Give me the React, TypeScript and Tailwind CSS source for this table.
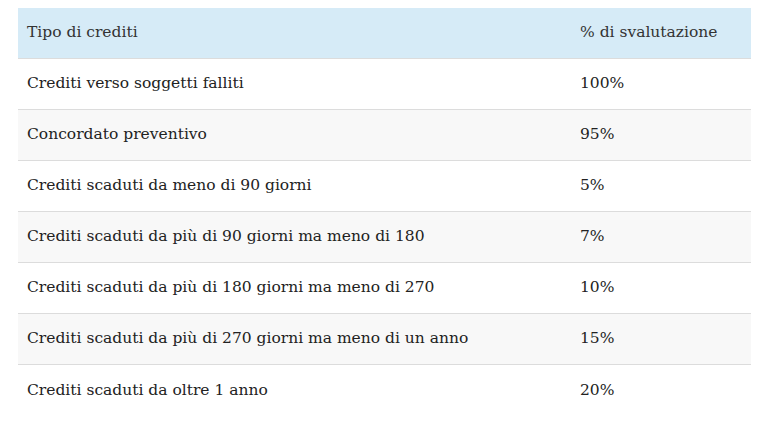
const rows: [string, string][] = [
  ['Crediti verso soggetti falliti', '100%'],
  ['Concordato preventivo', '95%'],
  ['Crediti scaduti da meno di 90 giorni', '5%'],
  ['Crediti scaduti da più di 90 giorni ma meno di 180', '7%'],
  ['Crediti scaduti da più di 180 giorni ma meno di 270', '10%'],
  ['Crediti scaduti da più di 270 giorni ma meno di un anno', '15%'],
  ['Crediti scaduti da oltre 1 anno', '20%'],
];

export default function App() {
  return (
    <div className="w-[768px] h-[426px] bg-white pt-[8px] pl-[18px] font-['DejaVu_Serif',serif] text-[15.5px]">
      <div className="w-[733px] flex flex-col">
        <div className="flex h-[51px] bg-[#d6ebf7] border-b border-[#dcdcdc] text-[#333]">
          <div className="w-[553px] pl-[9px] flex items-center">Tipo di crediti</div>
          <div className="flex-1 pl-[9px] flex items-center">% di svalutazione</div>
        </div>
        {rows.map(([a, b], i) => (
          <div
            key={i}
            className={
              'flex h-[51px] text-[#222] ' +
              (i % 2 === 1 ? 'bg-[#f8f8f8] ' : 'bg-white ') +
              (i < rows.length - 1 ? 'border-b border-[#dcdcdc]' : '')
            }
          >
            <div className="w-[553px] pl-[9px] flex items-center">{a}</div>
            <div className="flex-1 pl-[9px] flex items-center">{b}</div>
          </div>
        ))}
      </div>
    </div>
  );
}
